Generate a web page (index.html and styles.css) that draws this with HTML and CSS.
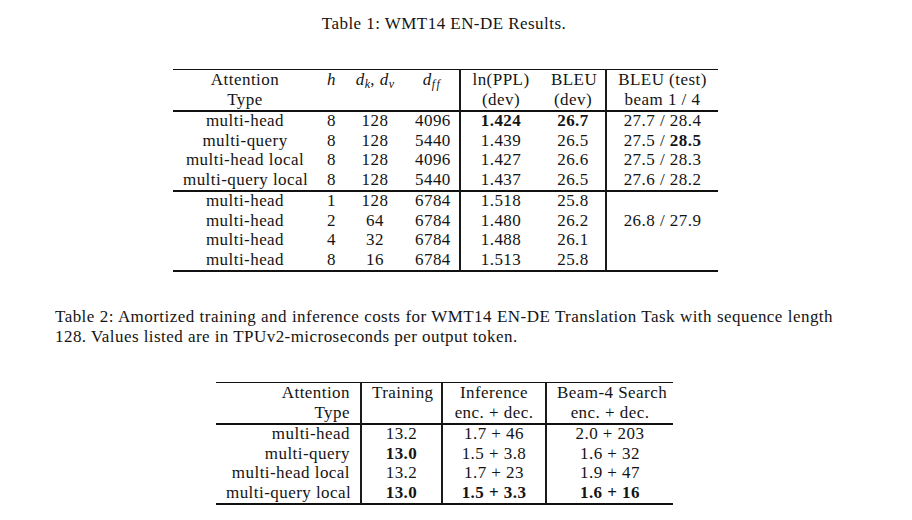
FILE: index.html
```html
<!DOCTYPE html>
<html>
<head>
<meta charset="utf-8">
<link rel="stylesheet" href="styles.css">
</head>
<body>
<div class="page">
  <p class="caption caption-center">Table 1: WMT14 EN-DE Results.</p>

  <table class="tbl t1">
    <colgroup>
      <col style="width:144px"><col style="width:28px"><col style="width:60px"><col style="width:54px"><col style="width:82px"><col style="width:64px"><col style="width:113px">
    </colgroup>
    <tr class="h1">
      <td>Attention</td><td><i>h</i></td><td><i>d</i><sub><i>k</i></sub>, <i>d</i><sub><i>v</i></sub></td><td><i>d</i><sub><i class="ff">ff</i></sub></td><td class="vl">ln(PPL)</td><td>BLEU</td><td class="vl">BLEU (test)</td>
    </tr>
    <tr class="h2">
      <td>Type</td><td></td><td></td><td></td><td class="vl">(dev)</td><td>(dev)</td><td class="vl">beam 1 / 4</td>
    </tr>
    <tr class="r">
      <td>multi-head</td><td>8</td><td>128</td><td>4096</td><td class="vl"><b>1.424</b></td><td><b>26.7</b></td><td class="vl">27.7 / 28.4</td>
    </tr>
    <tr class="r">
      <td>multi-query</td><td>8</td><td>128</td><td>5440</td><td class="vl">1.439</td><td>26.5</td><td class="vl">27.5 / <b>28.5</b></td>
    </tr>
    <tr class="r">
      <td>multi-head local</td><td>8</td><td>128</td><td>4096</td><td class="vl">1.427</td><td>26.6</td><td class="vl">27.5 / 28.3</td>
    </tr>
    <tr class="r mid-before">
      <td>multi-query local</td><td>8</td><td>128</td><td>5440</td><td class="vl">1.437</td><td>26.5</td><td class="vl">27.6 / 28.2</td>
    </tr>
    <tr class="r">
      <td>multi-head</td><td>1</td><td>128</td><td>6784</td><td class="vl">1.518</td><td>25.8</td><td class="vl"></td>
    </tr>
    <tr class="r">
      <td>multi-head</td><td>2</td><td>64</td><td>6784</td><td class="vl">1.480</td><td>26.2</td><td class="vl">26.8 / 27.9</td>
    </tr>
    <tr class="r">
      <td>multi-head</td><td>4</td><td>32</td><td>6784</td><td class="vl">1.488</td><td>26.1</td><td class="vl"></td>
    </tr>
    <tr class="r last">
      <td>multi-head</td><td>8</td><td>16</td><td>6784</td><td class="vl">1.513</td><td>25.8</td><td class="vl"></td>
    </tr>
  </table>

  <p class="caption caption-just">
    <span class="line-full">Table 2: Amortized training and inference costs for WMT14 EN-DE Translation Task with sequence length</span>
    <span class="line-last">128. Values listed are in TPUv2-microseconds per output token.</span>
  </p>

  <table class="tbl t2">
    <colgroup>
      <col style="width:144px"><col style="width:81px"><col style="width:104px"><col style="width:128px">
    </colgroup>
    <tr class="h1">
      <td class="ra">Attention</td><td class="vl">Training</td><td class="vl">Inference</td><td class="vl">Beam-4 Search</td>
    </tr>
    <tr class="h2">
      <td class="ra">Type</td><td class="vl"></td><td class="vl">enc. + dec.</td><td class="vl">enc. + dec.</td>
    </tr>
    <tr class="r">
      <td class="ra">multi-head</td><td class="vl">13.2</td><td class="vl">1.7 + 46</td><td class="vl">2.0 + 203</td>
    </tr>
    <tr class="r">
      <td class="ra">multi-query</td><td class="vl"><b>13.0</b></td><td class="vl">1.5 + 3.8</td><td class="vl">1.6 + 32</td>
    </tr>
    <tr class="r">
      <td class="ra">multi-head local</td><td class="vl">13.2</td><td class="vl">1.7 + 23</td><td class="vl">1.9 + 47</td>
    </tr>
    <tr class="r last">
      <td class="ra">multi-query local</td><td class="vl"><b>13.0</b></td><td class="vl"><b>1.5 + 3.3</b></td><td class="vl"><b>1.6 + 16</b></td>
    </tr>
  </table>
</div>
</body>
</html>
```

FILE: styles.css
```css
* { box-sizing: border-box; }

html, body {
  margin: 0;
  padding: 0;
  background: #ffffff;
}

body {
  font-family: "Liberation Serif", "Times New Roman", serif;
  font-size: 17px;
  letter-spacing: 0.45px;
  color: #141414;
}

.page {
  width: 778px;
  margin-left: 55px;
  padding-top: 14px;
}

.caption {
  margin: 0;
  line-height: 20px;
}

.caption-center {
  text-align: center;
}

.caption-just {
  margin-top: 35px;
}

.line-full {
  display: block;
  text-align: justify;
  text-align-last: justify;
}

.line-last {
  display: block;
  text-align: left;
}

.tbl {
  border-collapse: separate;
  border-spacing: 0;
  table-layout: fixed;
  margin: 35px auto 0 auto;
}

.t1 { width: 545px; margin-left: 118px; }
.t2 { width: 457px; margin-left: 161px; }

.tbl td {
  padding: 0 10px 2px 10px;
  text-align: center;
  vertical-align: top;
  white-space: nowrap;
  line-height: 17.5px;
  height: 19.5px;
}

.tbl .ra { text-align: right; }

.tbl .vl { border-left: 2px solid #1a1a1a; }

.tbl tr.h1 td {
  border-top: 1px solid #111;
  height: 21px;
  line-height: 19px;
}

.tbl tr.h2 td {
  border-bottom: 2px solid #111;
  height: 21px;
  line-height: 17px;
}

.tbl tr.mid-before td {
  border-bottom: 2px solid #111;
  height: 21.5px;
}

.tbl tr.last td {
  border-bottom: 2px solid #111;
  height: 21.5px;
}

sub {
  font-size: 12px;
  line-height: 0;
  vertical-align: -3px;
  letter-spacing: 0.2px;
}

.ff { letter-spacing: 1.5px; }

b { font-weight: bold; }
```
